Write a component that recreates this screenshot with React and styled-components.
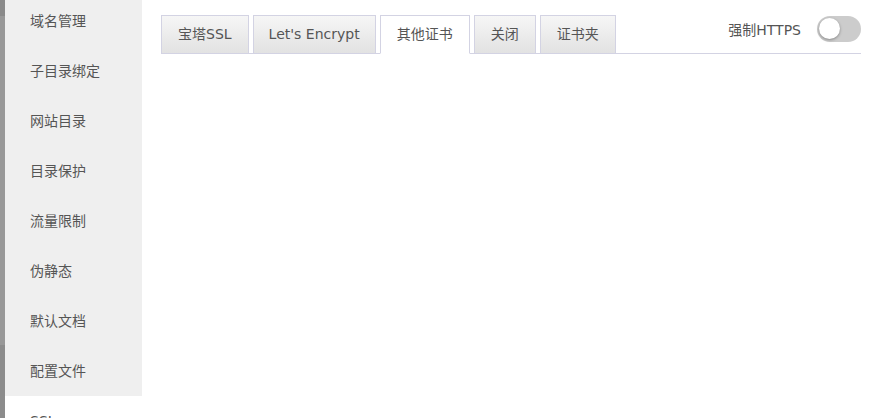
import styled, { createGlobalStyle } from "styled-components";

const GlobalStyle = createGlobalStyle`
  html, body {
    margin: 0;
    padding: 0;
    background: #fff;
    font-family: "DejaVu Sans", "Noto Sans CJK SC", sans-serif;
  }
`;

const Page = styled.div`
  display: flex;
  height: 418px;
  overflow: hidden;
`;

const Backdrop = styled.div`
  width: 5px;
  flex-shrink: 0;
  background: linear-gradient(#8a8a8a 0 16px, #989898 16px 345px, #8c8c8c 345px);
`;

const Sidebar = styled.ul`
  width: 137px;
  flex-shrink: 0;
  margin: -4px 0 0;
  padding: 0;
  list-style: none;
`;

const SideItem = styled.li`
  height: 50px;
  line-height: 50px;
  padding-left: 25px;
  font-size: 14px;
  color: #555;
  background: ${(p) => (p.$active ? "#fff" : "#efefef")};
`;

const Main = styled.div`
  flex: 1;
  padding: 14px 15px 0 19px;
`;

const TabBar = styled.div`
  display: flex;
  align-items: flex-end;
  border-bottom: 1px solid #d3d3e3;
  height: 39px;
`;

const Tab = styled.div`
  height: 39px;
  box-sizing: border-box;
  padding: 0 ${(p) => p.$pad || 16}px;
  margin-right: 4px;
  margin-bottom: -1px;
  line-height: 37px;
  font-size: 14px;
  color: #555;
  border: 1px solid #d3d3e3;
  border-bottom-color: ${(p) => (p.$active ? "#fff" : "#d3d3e3")};
  background: ${(p) =>
    p.$active ? "#fff" : "linear-gradient(#f6f6f6, #e2e2e2)"};
`;

const Spacer = styled.div`
  flex: 1;
`;

const ForceHttps = styled.div`
  display: flex;
  align-items: center;
  align-self: flex-start;
  gap: 16px;
  margin-top: 2px;
  font-size: 14px;
  color: #555;
`;

const Switch = styled.div`
  position: relative;
  width: 44px;
  height: 26px;
  border-radius: 13px;
  background: #ccc;
`;

const Knob = styled.div`
  position: absolute;
  top: 2px;
  left: 2px;
  width: 21px;
  height: 21px;
  border-radius: 50%;
  background: #fff;
  box-shadow: 0 1px 3px rgba(0, 0, 0, 0.35);
`;

const menu = [
  "域名管理",
  "子目录绑定",
  "网站目录",
  "目录保护",
  "流量限制",
  "伪静态",
  "默认文档",
  "配置文件",
  "SSL",
];

const tabs = [
  { label: "宝塔SSL" },
  { label: "Let's Encrypt", pad: 15 },
  { label: "其他证书", active: true },
  { label: "关闭" },
  { label: "证书夹" },
];

export default function App() {
  return (
    <Page>
      <GlobalStyle />
      <Backdrop />
      <Sidebar>
        {menu.map((m) => (
          <SideItem key={m} $active={m === "SSL"}>
            {m}
          </SideItem>
        ))}
      </Sidebar>
      <Main>
        <TabBar>
          {tabs.map((t) => (
            <Tab key={t.label} $active={t.active} $pad={t.pad}>
              {t.label}
            </Tab>
          ))}
          <Spacer />
          <ForceHttps>
            强制HTTPS
            <Switch>
              <Knob />
            </Switch>
          </ForceHttps>
        </TabBar>
      </Main>
    </Page>
  );
}
